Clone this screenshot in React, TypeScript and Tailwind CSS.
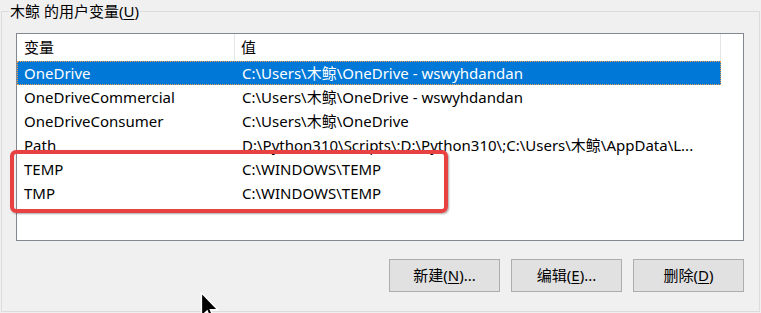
const FONT = { fontFamily: '"Noto Sans", "Noto Sans CJK SC", sans-serif' };

const rows = [
  { name: "OneDrive", value: "C:\\Users\\木鲸\\OneDrive - wswyhdandan", selected: true },
  { name: "OneDriveCommercial", value: "C:\\Users\\木鲸\\OneDrive - wswyhdandan" },
  { name: "OneDriveConsumer", value: "C:\\Users\\木鲸\\OneDrive" },
  { name: "Path", value: "D:\\Python310\\Scripts\\;D:\\Python310\\;C:\\Users\\木鲸\\AppData\\L..." },
  { name: "TEMP", value: "C:\\WINDOWS\\TEMP" },
  { name: "TMP", value: "C:\\WINDOWS\\TEMP" },
];

const WinButton = ({ label, hot, tail }: { label: string; hot: string; tail: string }) => (
  <button className="w-[111px] h-[33px] bg-[#e1e1e1] border border-[#adadad] text-[15px] text-black">
    {label}(<span className="underline underline-offset-2">{hot}</span>){tail}
  </button>
);

export default function App() {
  return (
    <div className="relative w-[761px] h-[313px] overflow-hidden bg-[#f0f0f0] text-black" style={FONT}>
      <fieldset className="ml-[1px] w-[759px] h-[312px] border border-[#dcdcdc] px-[14px]">
        <legend className="ml-[-7px] px-[1px] h-[22px] leading-[22px] text-[15px]">
          木鲸 的用户变量(<span className="underline underline-offset-2">U</span>)
        </legend>

        <div className="mt-[11px] w-[728px] h-[208px] border border-[#828790] bg-white">
          <div className="flex h-[27px] text-[15px] leading-[27px]">
            <div className="w-[218px] pl-[7px] border-r border-[#e5e5e5]">变量</div>
            <div className="w-[486px] pl-[6px] border-r border-[#e5e5e5]">值</div>
          </div>
          {rows.map((r) => (
            <div
              key={r.name}
              className={`flex w-[704px] h-[24px] text-[15px] leading-[22px] border ${
                r.selected ? "bg-[#0078d7] text-white border-dotted border-[#f0a050]" : "border-transparent"
              }`}
            >
              <div className="w-[218px] pl-[6px] whitespace-nowrap">{r.name}</div>
              <div className="w-[484px] pl-[6px] whitespace-nowrap">{r.value}</div>
            </div>
          ))}
        </div>

        <div className="flex justify-end gap-[11px] mt-[18px] w-[728px]">
          <WinButton label="新建" hot="N" tail="..." />
          <WinButton label="编辑" hot="E" tail="..." />
          <WinButton label="删除" hot="D" tail="" />
        </div>
      </fieldset>

      {/* red annotation box */}
      <div className="absolute left-[10px] top-[150px] w-[438px] h-[63px] border-[4px] border-[#e84141] rounded-[6px] shadow-[1px_1px_2px_rgba(0,0,0,0.35)]" />

      {/* mouse pointer */}
      <svg className="absolute left-[200px] top-[292px]" width="20" height="30" viewBox="0 0 13 21">
        <path d="M0.5 0.5 L0.5 17 L4.5 13.2 L7.2 19.6 L9.4 18.7 L6.8 12.4 L12 12.4 Z" fill="#000" stroke="#fff" strokeWidth="1" />
      </svg>
    </div>
  );
}
